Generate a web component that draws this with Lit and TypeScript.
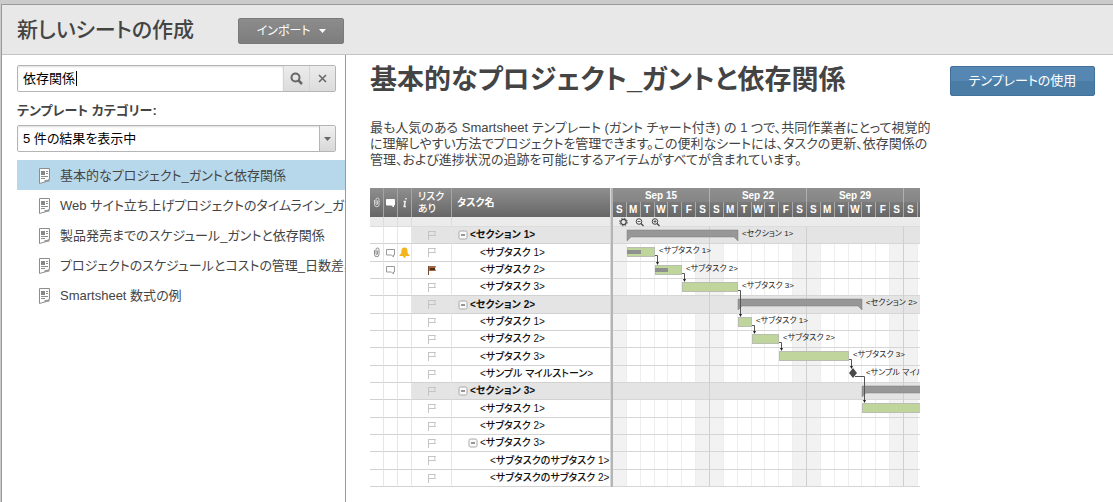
import { LitElement, html, svg, css, nothing } from "lit";
import { customElement, state } from "lit/decorators.js";
import { classMap } from "lit/directives/class-map.js";

type Row = {
  name: string;
  kind: "section" | "task" | "milestone";
  level?: number;
  open?: boolean;
  start?: number;
  end?: number;
  done?: number;
  attach?: boolean;
  comment?: boolean;
  alert?: boolean;
  risk?: boolean;
};

const ROWS: Row[] = [
  { name: "<セクション 1>", kind: "section", level: 0, open: true, start: 1, end: 9 },
  { name: "<サブタスク 1>", kind: "task", level: 1, start: 1, end: 3, done: 1, attach: true, comment: true, alert: true },
  { name: "<サブタスク 2>", kind: "task", level: 1, start: 3, end: 5, done: 1, comment: true, risk: true },
  { name: "<サブタスク 3>", kind: "task", level: 1, start: 5, end: 9 },
  { name: "<セクション 2>", kind: "section", level: 0, open: true, start: 9, end: 18 },
  { name: "<サブタスク 1>", kind: "task", level: 1, start: 9, end: 10 },
  { name: "<サブタスク 2>", kind: "task", level: 1, start: 10, end: 12 },
  { name: "<サブタスク 3>", kind: "task", level: 1, start: 12, end: 17 },
  { name: "<サンプル マイルストーン>", kind: "milestone", level: 1, start: 17, end: 18 },
  { name: "<セクション 3>", kind: "section", level: 0, open: true, start: 18, end: 26 },
  { name: "<サブタスク 1>", kind: "task", level: 1, start: 18, end: 26 },
  { name: "<サブタスク 2>", kind: "task", level: 1 },
  { name: "<サブタスク 3>", kind: "task", level: 1, open: true },
  { name: "<サブタスクのサブタスク 1>", kind: "task", level: 2 },
  { name: "<サブタスクのサブタスク 2>", kind: "task", level: 2 },
];

/* Finish-to-start dependencies, as row indexes. */
const LINKS = [[1, 2], [2, 3], [3, 5], [5, 6], [6, 7], [7, 8], [8, 10]];
const WEEK = 97;
const TOOLS = 10;
const dayX = (d: number) => Math.round((d * WEEK) / 7);
const rowY = (i: number) => TOOLS + Math.round((i * 52) / 3);

@customElement("gantt-preview")
export class GanttPreview extends LitElement {
  static styles = css`
    :host {
      display: flex;
      overflow: hidden;
      font: 10px "Liberation Sans", "Noto Sans CJK JP", sans-serif;
      font-feature-settings: "palt";
      color: #111;
    }
    svg { display: block; flex: none; }
    .grid {
      flex: none;
      width: 240px;
      table-layout: fixed;
      border-collapse: separate;
      border-spacing: 0;
    }
    .narrow { width: 14px; }
    .risk { width: 40px; }
    th, td {
      box-sizing: border-box;
      padding: 0;
      overflow: hidden;
      white-space: nowrap;
      text-align: left;
      line-height: 12px;
      border-right: 1px solid #e6e6e6;
      border-bottom: 1px solid #d2d2d2;
    }
    th:last-child, td:last-child { border-right: 0; }
    th {
      height: 29px;
      color: #fff;
      border-right-color: #a5a5a5;
      border-bottom: 0;
    }
    thead tr { background: linear-gradient(#8f8f8f, #666); }
    th.risk-head { font-weight: 500; padding-left: 6px; }
    th.name-head { padding-left: 5px; }
    .spacer td { height: 10px; background: #ebebeb; border-bottom-color: #dcdcdc; border-right-color: #dcdcdc; line-height: 0; }
    .row td { height: 17px; }
    .row.tall td { height: 18px; }
    .section .shade { background: #e4e4e4; }
    .section .name { font-weight: 700; }
    .icon svg { margin: 0 auto; }
    .name { display: flex; align-items: center; font-weight: 500; padding-left: 28px; gap: 2px; }
    .name.top { padding-left: 6px; }
    .name.branch { padding-left: 16px; }
    .name.deep { padding-left: 38px; }
    .split { flex: none; width: 3px; background: #b4b4b4; box-shadow: inset 1px 0 #d8d8d8; }
    .chart { flex: 1; min-width: 0; overflow: hidden; }
    .weeks, .days { display: grid; color: #fff; font-weight: 700; text-align: center; }
    .weeks { grid-template-columns: repeat(4, 97px); height: 14px; line-height: 15px; background: linear-gradient(#8f8f8f, #858585); }
    .days { grid-template-columns: repeat(4, 97px); height: 15px; line-height: 15px; background: linear-gradient(#7a7a7a, #666); }
    .week { box-sizing: border-box; border-right: 1px solid #b0b0b0; }
    .week-days { display: grid; grid-template-columns: repeat(7, 1fr); }
    .day { box-sizing: border-box; border-right: 1px solid #a8a8a8; }
    .label { font-size: 8px; fill: #222; }
  `;

  private flag(on?: boolean) {
    return on
      ? svg`<path d="M1.5 1v9" stroke="#7a4a2a" /><path d="M2 1h7l-1 2.500 1 2.500h-7z" fill="#a5683f" /><path d="M3 3h5v2h-5z" fill="#4a3020" />`
      : svg`<path d="M1.5 1v9M2 1.5h6.5l-1 2 1 2H2" fill="none" stroke="#c4c4c4" />`;
  }

  private clip(color: string) {
    return html`<svg width="8" height="11" viewBox="0 0 8 11" fill="none" stroke=${color}>
      <path d="M1.5 3v4.5a2 2 0 0 0 4.500 0V2.500a1.500 1.500 0 0 0-3 0v4.500a.7.7 0 0 0 1.400 0V3.500" />
    </svg>`;
  }

  private bubble(stroke: string, fill: string) {
    return html`<svg width="11" height="10" viewBox="0 0 11 10" fill=${fill} stroke=${stroke}>
      <path d="M2 1.500h7.500v5.500h-1v2l-2-2H1.500v-5.500z" stroke-linejoin="round" />
    </svg>`;
  }

  private row(r: Row, i: number) {
    const cls = {
      name: true,
      top: r.level === 0,
      branch: r.level === 1 && !!r.open,
      deep: r.level === 2,
    };
    return html`<tr class=${classMap({ row: true, tall: i % 3 === 1, section: r.kind === "section" })}>
      <td class="icon">${r.attach ? this.clip("#8a8a8a") : nothing}</td>
      <td class="icon">${r.comment ? this.bubble("#999", "#fff") : nothing}</td>
      <td class="icon">${r.alert
        ? html`<svg width="11" height="11" viewBox="0 0 11 11" fill="#f2b51c">
            <path d="M5.500 0.500c2.300 0 3 1.500 3 3.500 0 2 .5 3 2 4v1H.5v-1c1.500-1 2-2 2-4 0-2 .7-3.500 3-3.500z" />
            <circle cx="5.500" cy="9.500" r="1.300" />
          </svg>`
        : nothing}</td>
      <td class="icon shade"><svg width="10" height="11" viewBox="0 0 10 11">${this.flag(r.risk)}</svg></td>
      <td class="shade"><div class=${classMap(cls)}>${r.open
        ? html`<svg width="10" height="10" viewBox="0 0 10 10">
            <rect x="1" y="1" width="8" height="8" rx="1.500" fill="#fafafa" stroke="#a8a8a8" />
            <path d="M3 5h4" stroke="#333" />
          </svg>`
        : nothing}<span>${r.name}</span></div></td>
    </tr>`;
  }

  private bar(r: Row, i: number) {
    if (r.start === undefined || r.end === undefined) return nothing;
    const x = dayX(r.start);
    const e = dayX(r.end);
    const y = rowY(i) + 3;
    const label = svg`<text class="label" x=${e + 4} y=${y + 6}>${r.name}</text>`;
    if (r.kind === "section") {
      return svg`<path d="M${x} ${y}H${e}V${y + 11}L${e - 4} ${y + 7}H${x + 4}L${x} ${y + 11}Z" fill="#979797" stroke="#7c7c7c" stroke-width="0.500" />${label}`;
    }
    if (r.kind === "milestone") {
      return svg`<path d="M${x + 4} ${y - 1}l4 5-4 5-4-5z" fill="#4a4a4a" />${label}`;
    }
    return svg`<rect x=${x + 0.5} y=${y + 0.5} width=${e - x - 1} height="9" fill="#c0d59b" stroke="#b9bfb0" />
      ${r.done ? svg`<rect x=${x} y=${y + 3} width=${dayX(r.start + r.done) - x} height="4" fill="#8f9191" />` : nothing}
      ${label}`;
  }

  private link([a, b]: number[]) {
    const from = ROWS[a];
    const milestone = from.kind === "milestone";
    const sx = dayX(milestone ? from.start! : from.end!) + (milestone ? 8 : 0);
    const tx = dayX(ROWS[b].start!) + 2;
    const sy = rowY(a) + (milestone ? 10 : 11);
    const ty = rowY(b) + 2;
    return svg`<path d="M${sx - (milestone ? 2 : 0)} ${sy + 0.5}H${tx + 0.5}V${ty}" fill="none" stroke="#555" />
      <path d="M${tx - 1} ${ty - 2}h3l-1.500 3z" fill="#222" />`;
  }

  render() {
    const days = Array.from({ length: 24 }, (_, i) => i);
    return html`
      <table class="grid">
        <colgroup><col class="narrow" /><col class="narrow" /><col class="narrow" /><col class="risk" /><col /></colgroup>
        <thead>
          <tr>
            <th class="icon">${this.clip("#d5d5d5")}</th>
            <th class="icon">${this.bubble("#fff", "#fff")}</th>
            <th class="icon"><svg width="6" height="11" viewBox="0 0 6 11" stroke="#eee" stroke-width="1.500" fill="none"><path d="M4 1v1.500M1.500 4.500h1.700l-1 5h1.800" /></svg></th>
            <th class="risk-head">リスク<br />あり</th>
            <th class="name-head">タスク名</th>
          </tr>
        </thead>
        <tbody>
          <tr class="spacer"><td></td><td></td><td></td><td></td><td></td></tr>
          ${ROWS.map((r, i) => this.row(r, i))}
        </tbody>
      </table>
      <div class="split"></div>
      <div class="chart">
        <div class="weeks">${["Sep 15", "Sep 22", "Sep 29", ""].map((w) => html`<div class="week">${w}</div>`)}</div>
        <div class="days">${[0, 1, 2, 3].map(() => html`<div class="week-days">${[..."SMTWTFS"].map((d) => html`<div class="day">${d}</div>`)}</div>`)}</div>
        <svg width="307" height="270">
          <rect width="307" height="270" fill="#fff" />
          ${days.filter((d) => d % 7 === 0 || d % 7 === 6).map((d) => svg`<rect x=${dayX(d)} y="0" width="14" height="270" fill="#f2f2f2" />`)}
          ${days.map((d) => svg`<rect x=${dayX(d + 1) - 1} y="0" width="1" height="270" fill="#eeeeee" />`)}
          ${ROWS.map((r, i) => r.kind === "section" ? svg`<rect x="0" y=${rowY(i)} width="307" height="17" fill="#e4e4e4" />` : nothing)}
          ${ROWS.map((_, i) => svg`<rect x="0" y=${rowY(i + 1) - 1} width="307" height="1" fill="#d6d6d6" />`)}
          ${[1, 2, 3].map((w) => svg`<rect x=${w * WEEK - 1} y="0" width="1" height="270" fill="#cfcfcf" />`)}
          <rect width="307" height="10" fill="#ebebeb" />
          <rect y="9" width="307" height="1" fill="#dcdcdc" />
          <g fill="none" stroke="#444">
            <circle cx="10.500" cy="5" r="2.700" stroke-width="1.200" />
            <circle cx="10.500" cy="5" r="3.800" stroke-dasharray="1.500 1.480" />
            <circle cx="26" cy="4.500" r="2.800" /><path d="M28 6.500l2.500 2.500" stroke-width="1.300" /><path d="M24.500 4.500h3" stroke-width=".8" />
            <circle cx="42" cy="4.500" r="2.800" /><path d="M44 6.500l2.500 2.500" stroke-width="1.300" /><path d="M40.500 4.500h3M42 3v3" stroke-width=".8" />
          </g>
          ${ROWS.map((r, i) => this.bar(r, i))}
          ${LINKS.map((l) => this.link(l))}
        </svg>
      </div>
    `;
  }
}

@customElement("app-root")
export class AppRoot extends LitElement {
  static styles = css`
    :host {
      display: flex;
      flex-direction: column;
      box-sizing: border-box;
      min-height: 100vh;
      padding: 4px 0 0 1px;
      background: #cbcbcb;
      color: #444;
      font: 13px/16px "Liberation Sans", "Noto Sans CJK JP", sans-serif;
      font-feature-settings: "palt";
    }
    * { box-sizing: border-box; }
    button, input, select { font: inherit; font-feature-settings: inherit; margin: 0; }
    button { cursor: pointer; }
    svg { display: block; flex: none; }
    .window {
      flex: 1;
      display: flex;
      flex-direction: column;
      border: 1px solid #999;
      border-width: 1px 0 0 1px;
      background: #fff;
    }
    .top {
      display: flex;
      align-items: center;
      gap: 44px;
      height: 50px;
      padding-left: 15px;
      background: #e8e8e8;
      border-bottom: 1px solid #c4c4c4;
    }
    .title { margin: 0; font-size: 21px; line-height: 28px; font-weight: 500; }
    .import {
      display: flex;
      align-items: center;
      justify-content: center;
      gap: 8px;
      width: 106px;
      height: 26px;
      margin-top: 3px;
      padding: 0;
      font-size: 12px;
      color: #fff;
      background: linear-gradient(#8c8c8c, #7d7d7d);
      border: 1px solid #7a7a7a;
      border-radius: 2px;
    }
    .body { flex: 1; display: flex; }
    .side {
      flex: none;
      width: 344px;
      padding: 10px 0 0 15px;
      border-right: 1px solid #999;
      overflow: hidden;
    }
    .search, .picker {
      position: relative;
      display: flex;
      width: 319px;
      height: 27px;
      border: 1px solid #b5b5b5;
      border-radius: 2px;
      overflow: hidden;
      color: #000;
    }
    .query { flex: 1; min-width: 0; border: 0; padding: 0 5px; outline: 0; color: #000; background: #fff; box-shadow: inset 0 1px 2px #ddd; }
    .caret { position: absolute; left: 58px; top: 5px; width: 1px; height: 15px; background: #000; }
    .tool {
      display: flex;
      align-items: center;
      justify-content: center;
      width: 26px;
      padding: 0;
      border: 0;
      border-left: 1px solid #d4d4d4;
      background: linear-gradient(#ececec, #dcdcdc);
    }
    .caption { display: block; margin: 11px 0 6px; font-weight: 700; }
    .category {
      flex: 1;
      appearance: none;
      border: 0;
      padding: 0 24px 0 5px;
      background: #fff;
      color: #000;
      box-shadow: inset 0 1px 2px #ddd;
    }
    .drop {
      position: absolute;
      inset: 0 0 0 auto;
      width: 16px;
      display: grid;
      place-items: center;
      border-left: 1px solid #b5b5b5;
      background: linear-gradient(#f0f0f0, #d8d8d8);
      pointer-events: none;
    }
    .list { list-style: none; margin: 8px 0 0; padding: 0; }
    .item {
      display: flex;
      align-items: center;
      gap: 9px;
      height: 30px;
      padding: 2px 0 0 22px;
      color: #444;
      text-decoration: none;
      white-space: nowrap;
    }
    .item.on { background: #b7d8ea; }
    .main { flex: 1; min-width: 0; display: flex; align-items: flex-start; justify-content: space-between; gap: 30px; padding: 11px 18px 15px 24px; }
    .detail { flex: 0 1 550px; min-width: 0; }
    .name { margin: 0; font-size: 27px; line-height: 28px; font-weight: 700; white-space: nowrap; }
    .text { margin: 26px 0 20px; }
    .line { display: block; white-space: nowrap; }
    .use {
      flex: none;
      width: 145px;
      height: 30px;
      padding: 0;
      color: #fff;
      background: linear-gradient(#5687b3 50%, #4a7ca6 50%);
      border: 1px solid #42729c;
      border-radius: 2px;
    }
  `;

  @state() private selected = 0;

  private templates = [
    "基本的なプロジェクト_ガントと依存関係",
    "Web サイト立ち上げプロジェクトのタイムライン_ガントと依存関係",
    "製品発売までのスケジュール_ガントと依存関係",
    "プロジェクトのスケジュールとコストの管理_日数差異と依存関係",
    "Smartsheet 数式の例",
  ];

  private pick(e: Event, i: number) {
    e.preventDefault();
    this.selected = i;
  }

  render() {
    return html`
      <div class="window">
        <header class="top">
          <h1 class="title">新しいシートの作成</h1>
          <button class="import" type="button">インポート
            <svg width="7" height="4" viewBox="0 0 7 4"><path d="M0 0h7L3.500 4z" fill="#fff" /></svg>
          </button>
        </header>
        <div class="body">
          <aside class="side">
            <div class="search">
              <input class="query" type="text" aria-label="検索" .value=${"依存関係"} />
              <span class="caret"></span>
              <button class="tool" type="button" aria-label="検索">
                <svg width="13" height="13" viewBox="0 0 13 13" fill="none" stroke="#666" stroke-width="2"><circle cx="5.500" cy="5.500" r="4" /><path d="M8.500 8.500l3.500 3.500" stroke-width="2.500" /></svg>
              </button>
              <button class="tool" type="button" aria-label="クリア">
                <svg width="9" height="9" viewBox="0 0 9 9" stroke="#666" stroke-width="1.500"><path d="M1 1l7 7M8 1l-7 7" /></svg>
              </button>
            </div>
            <label class="caption" for="category">テンプレート カテゴリー:</label>
            <div class="picker">
              <select class="category" id="category"><option>5 件の結果を表示中</option></select>
              <span class="drop"><svg width="7" height="4" viewBox="0 0 7 4"><path d="M0 0h7L3.500 4z" fill="#666" /></svg></span>
            </div>
            <ul class="list">
              ${this.templates.map((t, i) => html`<li>
                <a class=${classMap({ item: true, on: i === this.selected })} href="#" @click=${(e: Event) => this.pick(e, i)}>
                  <svg width="12" height="16" viewBox="0 0 12 16" fill="none" stroke="#8d8d8d">
                    <path d="M.5 .5h10v10.500q-1 2-5 3l-5 1.500z" fill="#fff" />
                    <path d="M5 14.500q1-1 .5-2.500 3 .5 5-1.500v3z" fill="#999" stroke="none" />
                    <rect x="2" y="3" width="4" height="4" fill="#888" stroke="none" />
                    <path d="M7 3.500h2M7 5.500h2M2 8.500h7M2 10.500h4" />
                  </svg>
                  <span>${t}</span>
                </a>
              </li>`)}
            </ul>
          </aside>
          <main class="main">
            <article class="detail">
              <h2 class="name">基本的なプロジェクト_ガントと依存関係</h2>
              <p class="text">
                <span class="line">最も人気のある Smartsheet テンプレート (ガント チャート付き) の 1 つで、共同作業者にとって視覚的</span>
                <span class="line">に理解しやすい方法でプロジェクトを管理できます。この便利なシートには、タスクの更新、依存関係の</span>
                <span class="line">管理、および進捗状況の追跡を可能にするアイテムがすべてが含まれています。</span>
              </p>
              <gantt-preview></gantt-preview>
            </article>
            <button class="use" type="button">テンプレートの使用</button>
          </main>
        </div>
      </div>
    `;
  }
}
